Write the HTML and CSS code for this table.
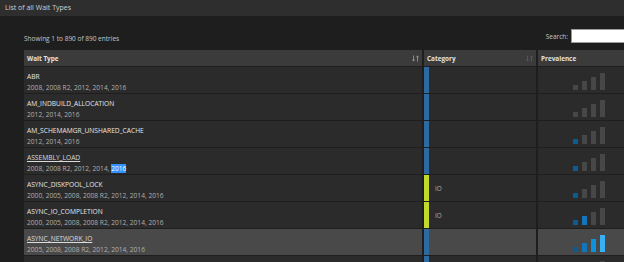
FILE: index.html
```html
<!DOCTYPE html>
<html>
<head>
<meta charset="utf-8">
<link rel="stylesheet" href="styles.css">
</head>
<body>
<div class="titlebar">List of all Wait Types</div>
<div class="content">
  <div class="toolbar">
    <div class="info">Showing 1 to 890 of 890 entries</div>
    <label class="search">Search: <span class="search-input"></span></label>
  </div>
  <div class="table">
    <div class="row head">
      <div class="cell hcell">Wait Type
        <svg class="sort bright" width="7" height="7" viewBox="0 0 7 7"><path d="M1.5 0.5V6M0.3 4.6L1.5 6.2L2.7 4.6M5.5 6.5V1M4.3 2.4L5.5 0.8L6.7 2.4" fill="none" stroke="currentColor" stroke-width="1"/></svg>
      </div>
      <div class="cell hcell">Category
        <svg class="sort dim" width="7" height="7" viewBox="0 0 7 7"><path d="M1.5 0.5V6M0.3 4.6L1.5 6.2L2.7 4.6M5.5 6.5V1M4.3 2.4L5.5 0.8L6.7 2.4" fill="none" stroke="currentColor" stroke-width="1"/></svg>
      </div>
      <div class="cell hcell">Prevalence</div>
    </div>

    <div class="row">
      <div class="cell name"><div class="wt">ABR</div><div class="ver">2008, 2008 R2, 2012, 2014, 2016</div></div>
      <div class="cell cat blue"></div>
      <div class="cell prev"><span class="bar b1"></span><span class="bar b2"></span><span class="bar b3"></span><span class="bar b4"></span></div>
    </div>
    <div class="row">
      <div class="cell name"><div class="wt">AM_INDBUILD_ALLOCATION</div><div class="ver">2012, 2014, 2016</div></div>
      <div class="cell cat blue"></div>
      <div class="cell prev"><span class="bar b1"></span><span class="bar b2"></span><span class="bar b3"></span><span class="bar b4"></span></div>
    </div>
    <div class="row">
      <div class="cell name"><div class="wt">AM_SCHEMAMGR_UNSHARED_CACHE</div><div class="ver">2012, 2014, 2016</div></div>
      <div class="cell cat blue"></div>
      <div class="cell prev"><span class="bar b1 on1"></span><span class="bar b2"></span><span class="bar b3"></span><span class="bar b4"></span></div>
    </div>
    <div class="row">
      <div class="cell name"><div class="wt link">ASSEMBLY_LOAD</div><div class="ver">2008, 2008 R2, 2012, 2014, <span class="sel">2016</span></div></div>
      <div class="cell cat blue"></div>
      <div class="cell prev"><span class="bar b1 on1"></span><span class="bar b2"></span><span class="bar b3"></span><span class="bar b4"></span></div>
    </div>
    <div class="row">
      <div class="cell name"><div class="wt">ASYNC_DISKPOOL_LOCK</div><div class="ver">2000, 2005, 2008, 2008 R2, 2012, 2014, 2016</div></div>
      <div class="cell cat green">IO</div>
      <div class="cell prev"><span class="bar b1 on1"></span><span class="bar b2"></span><span class="bar b3"></span><span class="bar b4"></span></div>
    </div>
    <div class="row">
      <div class="cell name"><div class="wt">ASYNC_IO_COMPLETION</div><div class="ver">2000, 2005, 2008, 2008 R2, 2012, 2014, 2016</div></div>
      <div class="cell cat green">IO</div>
      <div class="cell prev"><span class="bar b1 on1"></span><span class="bar b2 on2"></span><span class="bar b3"></span><span class="bar b4"></span></div>
    </div>
    <div class="row hover">
      <div class="cell name"><div class="wt link">ASYNC_NETWORK_IO</div><div class="ver">2005, 2008, 2008 R2, 2012, 2014, 2016</div></div>
      <div class="cell cat blue"></div>
      <div class="cell prev"><span class="bar b1 on1"></span><span class="bar b2 on2"></span><span class="bar b3 on3"></span><span class="bar b4 on4"></span></div>
    </div>
    <div class="row">
      <div class="cell name"></div>
      <div class="cell cat blue"></div>
      <div class="cell prev"><span class="bar b1"></span><span class="bar b2"></span><span class="bar b3"></span><span class="bar b4"></span></div>
    </div>
  </div>
</div>
</body>
</html>
```

FILE: styles.css
```css
html, body {
  margin: 0;
  padding: 0;
  overflow: hidden;
  width: 624px;
  height: 262px;
  background: #1e1e1e;
  font-family: "Open Sans", "Noto Sans", sans-serif;
}

.titlebar {
  height: 16px;
  line-height: 15px;
  padding-left: 5px;
  background: #2e2e2e;
  color: #cfcfcf;
  font-size: 7px;
}

.content {
  padding-left: 24px;
}

.toolbar {
  display: flex;
  justify-content: space-between;
  align-items: flex-start;
  height: 34px;
  margin-right: -12px;
}

.info {
  margin-top: 18px;
  color: #c6c6c6;
  font-size: 6.5px;
}

.search {
  margin-top: 13px;
  display: flex;
  align-items: center;
  gap: 3px;
  color: #c6c6c6;
  font-size: 6.5px;
}

.search-input {
  display: block;
  width: 65px;
  height: 14px;
  background: #ffffff;
  border: 1px solid #9a9a9a;
  box-sizing: border-box;
}

.table {
  width: 640px;
  display: flex;
  flex-direction: column;
  gap: 2px;
}

.row {
  display: grid;
  grid-template-columns: 398px 112px 1fr;
  column-gap: 2px;
  height: 25px;
}

.row.head {
  height: 16px;
  margin-bottom: -1px;
}

.cell {
  background: #2b2b2b;
  box-sizing: border-box;
}

.row.hover .cell {
  background: #494949;
}

.hcell {
  background: #3b3b3b;
  color: #e2e2e2;
  font-weight: 700;
  font-size: 6.4px;
  display: flex;
  align-items: center;
  justify-content: space-between;
  padding: 0 3px 0 3px;
}

.sort {
  display: block;
}

.sort.bright {
  color: #8a8a8a;
}

.sort.dim {
  color: #555555;
}

.name {
  padding: 4px 0 0 3px;
  font-size: 6.65px;
  line-height: 11px;
}

.wt {
  color: #e6e6e6;
}

.wt.link {
  text-decoration: underline;
  color: #dcdcdc;
}

.ver {
  color: #b0b0b0;
}

.sel {
  background: #3391ff;
  color: #ffffff;
}

.cat {
  border-left: 5px solid #2e6aa2;
  padding-left: 6px;
  display: flex;
  align-items: center;
  color: #b0b0b0;
  font-size: 6.4px;
}

.cat.green {
  border-left-color: #c2d82c;
}

.prev {
  display: flex;
  align-items: flex-end;
  gap: 4px;
  padding: 0 0 3px 35px;
}

.bar {
  display: block;
  width: 5px;
  background: #474747;
}

.b1 { height: 5px; }
.b2 { height: 9px; }
.b3 { height: 13px; }
.b4 { height: 17px; }

.on1 { background: #0b5c92; }
.on2 { background: #1575ba; }
.on3 { background: #0d92df; }
.on4 { background: #3ab0f4; }
```
